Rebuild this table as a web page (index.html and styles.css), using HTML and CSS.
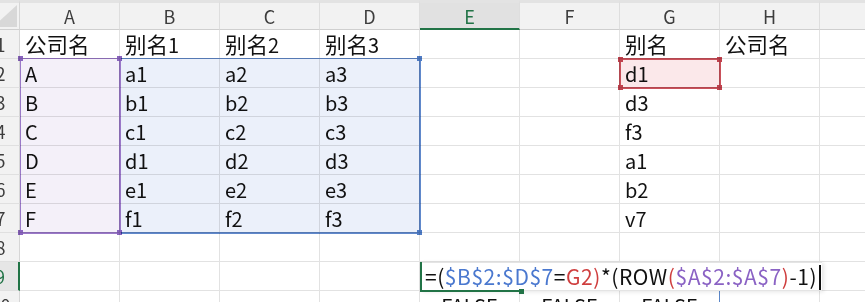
FILE: index.html
```html
<!DOCTYPE html>
<html lang="zh">
<head>
<meta charset="utf-8">
<title>Sheet</title>
<link rel="stylesheet" href="styles.css">
</head>
<body>
<div class="viewport">
  <div class="grid">
    <div class="corner"><div class="tri"></div></div>
    <div class="ch">A</div><div class="ch">B</div><div class="ch">C</div><div class="ch">D</div>
    <div class="ch ch-active">E</div><div class="ch">F</div><div class="ch">G</div><div class="ch">H</div><div class="ch"></div>

    <div class="rh">1</div>
    <div class="c"><span class="cj">公司名</span></div><div class="c"><span class="cj">别名</span>1</div><div class="c"><span class="cj">别名</span>2</div><div class="c"><span class="cj">别名</span>3</div><div class="c"></div><div class="c"></div><div class="c"><span class="cj">别名</span></div><div class="c"><span class="cj">公司名</span></div><div class="c"></div>

    <div class="rh">2</div>
    <div class="c">A</div><div class="c">a1</div><div class="c">a2</div><div class="c">a3</div><div class="c"></div><div class="c"></div><div class="c">d1</div><div class="c"></div><div class="c"></div>

    <div class="rh">3</div>
    <div class="c">B</div><div class="c">b1</div><div class="c">b2</div><div class="c">b3</div><div class="c"></div><div class="c"></div><div class="c">d3</div><div class="c"></div><div class="c"></div>

    <div class="rh">4</div>
    <div class="c">C</div><div class="c">c1</div><div class="c">c2</div><div class="c">c3</div><div class="c"></div><div class="c"></div><div class="c">f3</div><div class="c"></div><div class="c"></div>

    <div class="rh">5</div>
    <div class="c">D</div><div class="c">d1</div><div class="c">d2</div><div class="c">d3</div><div class="c"></div><div class="c"></div><div class="c">a1</div><div class="c"></div><div class="c"></div>

    <div class="rh">6</div>
    <div class="c">E</div><div class="c">e1</div><div class="c">e2</div><div class="c">e3</div><div class="c"></div><div class="c"></div><div class="c">b2</div><div class="c"></div><div class="c"></div>

    <div class="rh">7</div>
    <div class="c">F</div><div class="c">f1</div><div class="c">f2</div><div class="c">f3</div><div class="c"></div><div class="c"></div><div class="c">v7</div><div class="c"></div><div class="c"></div>

    <div class="rh">8</div>
    <div class="c"></div><div class="c"></div><div class="c"></div><div class="c"></div><div class="c"></div><div class="c"></div><div class="c"></div><div class="c"></div><div class="c"></div>

    <div class="rh rh-active">9</div>
    <div class="c"></div><div class="c"></div><div class="c"></div><div class="c"></div><div class="c"></div><div class="c"></div><div class="c"></div><div class="c"></div><div class="c"></div>

    <div class="rh">10</div>
    <div class="c"></div><div class="c"></div><div class="c"></div><div class="c"></div><div class="c bool">FALSE</div><div class="c bool">FALSE</div><div class="c bool spill-r">FALSE</div><div class="c"></div><div class="c"></div>
  </div>

  <div class="range range-a"><i class="h tl"></i><i class="h tr"></i><i class="h bl"></i><i class="h br"></i></div>
  <div class="range range-bd"><i class="h tr"></i><i class="h br"></i></div>
  <div class="range range-g"><i class="h tl"></i><i class="h tr"></i><i class="h bl"></i><i class="h br"></i></div>

  <div class="editor"><span class="k">=(</span><span class="blue">$B$2:$D$7</span><span class="k">=</span><span class="red">G2)</span><span class="k">*(ROW</span><span class="red">(</span><span class="purple">$A$2:$A$7</span><span class="red">)</span><span class="k">-1)</span><span class="caret"></span></div>
  <div class="active-cell"><i class="fill"></i></div>
</div>
</body>
</html>
```

FILE: styles.css
```css
* { box-sizing: border-box; }
html, body { margin: 0; padding: 0; background: #fff; }
body {
  width: 865px;
  height: 302px;
  overflow: hidden;
  font-family: "Noto Sans CJK SC", "Noto Sans", sans-serif;
}
.viewport {
  position: relative;
  width: 865px;
  height: 302px;
  overflow: hidden;
}
.grid {
  display: grid;
  grid-template-columns: 40px repeat(9, 100px);
  grid-template-rows: 30px repeat(10, 29px);
  margin-left: -20px;
  width: max-content;
}
.corner {
  background: #f2f2f2;
  border-top: 3px solid #e3e3e3;
  border-right: 1px solid #d6d6d6;
  border-bottom: 1px solid #cfcfcf;
  position: relative;
}
.tri {
  position: absolute;
  right: 2px;
  bottom: 2px;
  width: 0;
  height: 0;
  border-left: 24px solid transparent;
  border-bottom: 22px solid #d8d8d8;
}
.ch {
  background: #f2f2f2;
  border-top: 3px solid #e3e3e3;
  border-right: 1px solid #dedede;
  border-bottom: 1px solid #cfcfcf;
  color: #3d3d3d;
  font-size: 18px;
  line-height: 26px;
  text-align: center;
}
.ch-active {
  background: #e1e1e1;
  color: #217346;
  border-bottom: 2px solid #217346;
}
.rh {
  background: #f2f2f2;
  border-right: 1px solid #d6d6d6;
  border-bottom: 1px solid #e0e0e0;
  color: #3d3d3d;
  font-size: 18px;
  line-height: 28px;
  text-align: center;
  padding-left: 2px;
}
.rh-active {
  color: #217346;
  border-right: 2px solid #217346;
  background: #e6e6e6;
}
.c {
  border-right: 1px solid #e2e2e2;
  border-bottom: 1px solid #e2e2e2;
  font-size: 20px;
  line-height: 28px;
  padding: 1px 0 0 5px;
  color: #111;
  white-space: nowrap;
  overflow: hidden;
}
.cj { font-size: 21.5px; line-height: 1; }
.bool { text-align: center; padding-left: 0; }
.spill-r { border-right: 1px solid #5b87c9; }

.range {
  position: absolute;
  mix-blend-mode: multiply;
}
.range .h {
  position: absolute;
  width: 5px;
  height: 5px;
}
.h.tl { left: -3px; top: -3px; }
.h.tr { right: -3px; top: -3px; }
.h.bl { left: -3px; bottom: -3px; }
.h.br { right: -3px; bottom: -3px; }

.range-a {
  left: 20px; top: 58px; width: 101px; height: 176px;
  border: 2px solid #9a78c8;
  border-top-width: 1.5px;
  border-left-width: 1.5px;
  background: #f4f0f9;
}
.range-a .h { background: #8a64bf; }
.range-bd {
  left: 121px; top: 58px; width: 300px; height: 176px;
  border: 2px solid #6088cb;
  border-left: none;
  border-top-width: 1.5px;
  background: #ebf0fa;
}
.range-bd .h { background: #4f7cc6; }
.range-g {
  left: 619px; top: 58px; width: 102px; height: 31px;
  border: 2px solid #c9505a;
  background: #fbe8ea;
}
.range-g .h { background: #c0414d; }

.editor {
  position: absolute;
  left: 420px;
  top: 262px;
  width: 402px;
  height: 29px;
  background: #fff;
  border: 1px solid #e4e4e4;
  border-left: none;
  border-right: none;
  box-shadow: 2px 1px 4px rgba(0,0,0,0.10);
  font-size: 21px;
  letter-spacing: 0.55px;
  line-height: 26px;
  padding-left: 5px;
  white-space: nowrap;
  color: #111;
}
.k { color: #111; }
.blue { color: #4a78cf; }
.red { color: #cf3e3e; }
.purple { color: #8a62c4; }
.caret {
  display: inline-block;
  width: 1.5px;
  height: 25px;
  background: #111;
  vertical-align: -5px;
  margin-left: 2px;
}
.active-cell {
  position: absolute;
  left: 420px;
  top: 262px;
  width: 101px;
  height: 30px;
  border-left: 2px solid #217346;
  border-bottom: 2px solid #217346;
}
.active-cell .fill {
  position: absolute;
  right: -3px;
  bottom: -4px;
  width: 5px;
  height: 5px;
  background: #217346;
}
```
